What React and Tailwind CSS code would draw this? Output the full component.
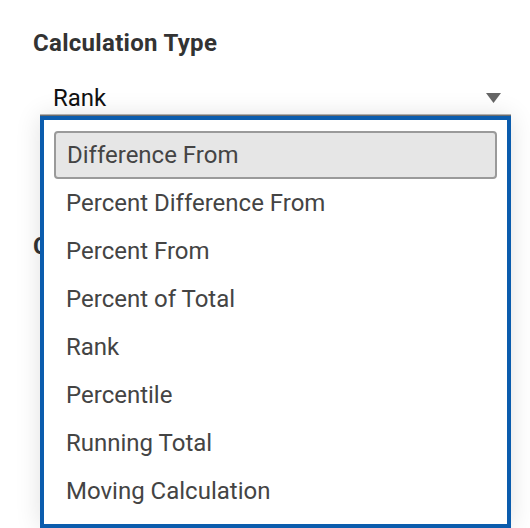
import React from "react";

const items = [
  "Difference From",
  "Percent Difference From",
  "Percent From",
  "Percent of Total",
  "Rank",
  "Percentile",
  "Running Total",
  "Moving Calculation",
];

export default function App() {
  return (
    <div className="relative w-[530px] h-[528px] overflow-hidden bg-white font-['Roboto',sans-serif]">
      <div className="flex flex-col pl-[33px] pt-[29px]">
        <div className="text-[24px] leading-[28px] font-bold tracking-[0.3px] text-[#333333]">Calculation Type</div>
        <div className="mt-[23px] ml-[7px] w-[471px] h-[36px] flex items-center justify-between pl-[13px] pr-[10px]">
          <span className="text-[24px] text-[#111111]">Rank</span>
          <svg width="15" height="10" viewBox="0 0 15 10">
            <polygon points="0,0 15,0 7.5,10" fill="#666666" />
          </svg>
        </div>
        <div className="mt-[116px] text-[24px] leading-[28px] font-bold tracking-[0.3px] text-[#333333]">Compute Using</div>
      </div>

      <div className="absolute left-[40px] top-[116px] w-[471px] h-[412px] bg-white border-[4px] border-[#0b5cad] shadow-[0_-1.5px_0_#6b6b6b,0_0_24px_rgba(0,0,0,0.12)] px-[10px] pt-[11px]">
        <ul className="flex flex-col">
          {items.map((it, i) => (
            <li
              key={it}
              className={
                i === 0
                  ? "h-[48px] flex items-center px-[11px] text-[24px] text-[#444444] bg-[#e6e6e6] border-2 border-[#9a9a9a] rounded-[4px]"
                  : "h-[48px] flex items-center px-[12px] text-[24px] text-[#444444]"
              }
            >
              {it}
            </li>
          ))}
        </ul>
      </div>
    </div>
  );
}
